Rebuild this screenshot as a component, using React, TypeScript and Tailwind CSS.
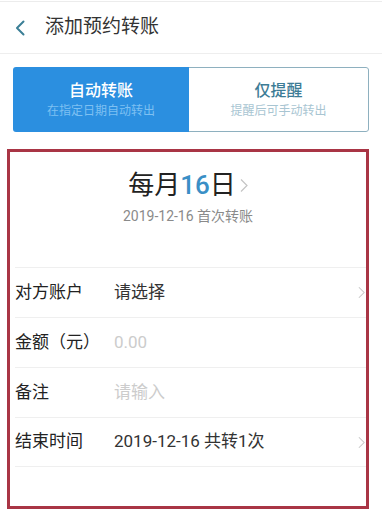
const font = { fontFamily: 'Roboto, "Noto Sans CJK SC", sans-serif' };

function Arrow({ className }: { className?: string }) {
  return (
    <svg viewBox="0 0 8 14" className={className} fill="none" stroke="currentColor" strokeWidth="1.2">
      <polyline points="1,1 7,7 1,13" />
    </svg>
  );
}

const rows = [
  { label: '对方账户', value: '请选择', muted: false, arrow: true },
  { label: '金额（元）', value: '0.00', muted: true, arrow: false },
  { label: '备注', value: '请输入', muted: true, arrow: false },
  { label: '结束时间', value: '2019-12-16 共转1次', muted: false, arrow: true },
];

export default function App() {
  return (
    <div className="w-[382px] h-[514px] bg-white overflow-hidden" style={font}>
      <div className="h-[2px] border-b border-[#ececec]" />
      <header className="h-[52px] flex items-center border-b border-[#eeeeee]">
        <svg viewBox="0 0 10 16" className="ml-[15px] w-[10px] h-[16px] text-[#3b7f96]" fill="none" stroke="currentColor" strokeWidth="2" strokeLinecap="round" strokeLinejoin="round">
          <polyline points="8.5,1.5 2,8 8.5,14.5" />
        </svg>
        <span className="ml-[20px] text-[19px] text-[#333333]">添加预约转账</span>
      </header>

      <div className="mt-[13px] mx-[13px] h-[65px] flex rounded-[3px] overflow-hidden">
        <div className="w-[176px] bg-[#2b8fe0] flex flex-col items-center justify-center">
          <span className="text-[16px] leading-[20px] font-medium text-white">自动转账</span>
          <span className="mt-[2px] text-[12px] leading-[16px] text-[#7ec0f2]">在指定日期自动转出</span>
        </div>
        <div className="flex-1 border border-l-0 border-[#8eb0bf] rounded-r-[3px] flex flex-col items-center justify-center">
          <span className="text-[16px] leading-[20px] font-medium text-[#3d7c96]">仅提醒</span>
          <span className="mt-[2px] text-[12px] leading-[16px] text-[#a8c5d2]">提醒后可手动转出</span>
        </div>
      </div>

      <section className="mt-[17px] ml-[7px] mr-[13px] h-[360px] border-[3px] border-[#a93545]">
        <div className="h-[115px] flex flex-col items-center">
          <div className="mt-[18px] flex items-center text-[26px] leading-[30px] text-[#222222]">
            <span>每月</span>
            <span className="font-medium text-[#3a8fc6]">16</span>
            <span>日</span>
            <Arrow className="ml-[4px] w-[8px] h-[15px] text-[#c4c4c4]" />
          </div>
          <div className="mt-[6px] text-[14px] leading-[20px] text-[#8a8a8a]">2019-12-16 首次转账</div>
        </div>
        <div className="ml-[5px]">
          {rows.map((r, i) => (
            <div
              key={r.label}
              className={
                'h-[50px] flex items-center border-t border-[#efefef]' +
                (i === rows.length - 1 ? ' border-b' : '')
              }
            >
              <span className="w-[99px] text-[17px] text-[#222222]">{r.label}</span>
              <span className={r.muted ? 'flex-1 text-[17px] text-[#cccccc]' : 'flex-1 text-[17px] text-[#333333]'}>
                {r.value}
              </span>
              {r.arrow && <Arrow className="mr-[1px] w-[7px] h-[13px] text-[#c8c8c8]" />}
            </div>
          ))}
        </div>
      </section>
    </div>
  );
}
